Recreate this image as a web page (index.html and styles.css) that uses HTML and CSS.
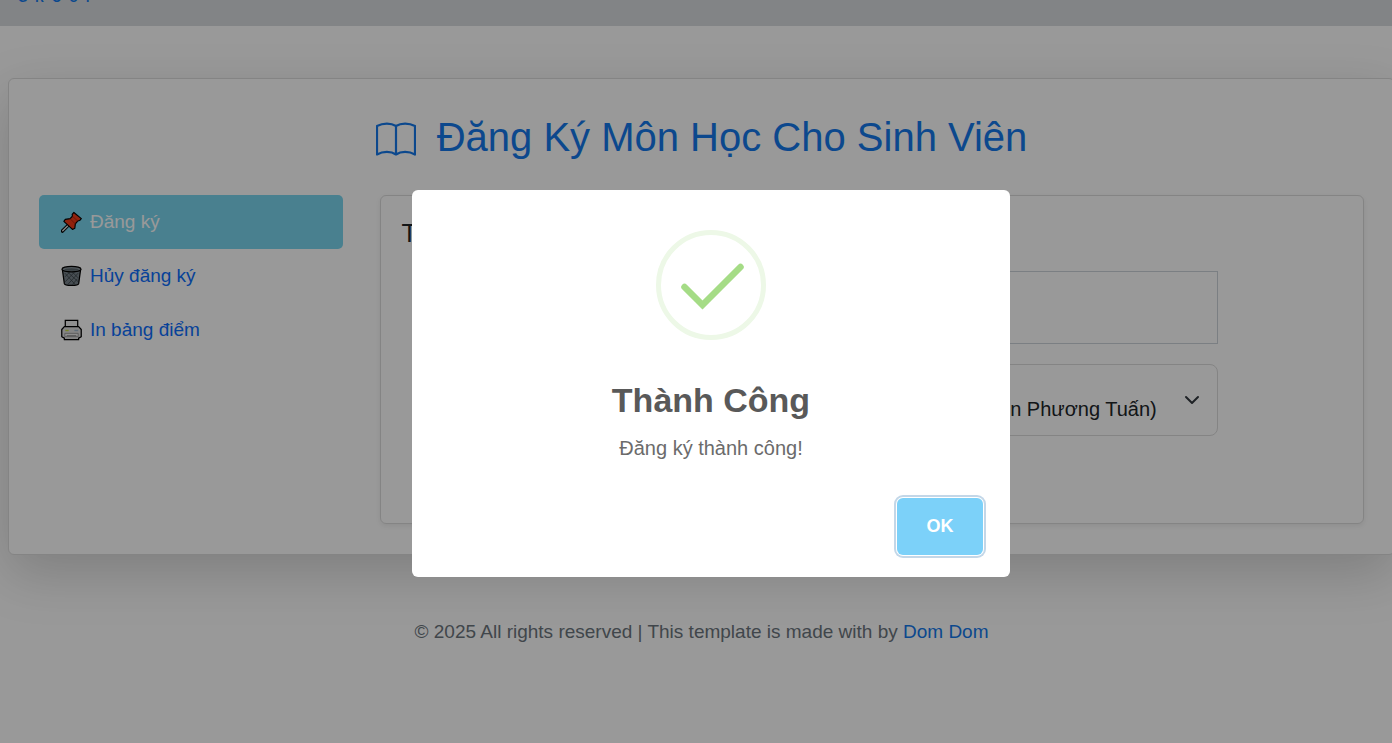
FILE: index.html
```html
<!DOCTYPE html>
<html lang="vi">
<head>
<meta charset="utf-8">
<title>Đăng Ký Môn Học</title>
<link rel="stylesheet" href="styles.css">
</head>
<body>
<header class="topbar"><span class="brand">GROUP</span></header>
<main class="panel">
  <h1 class="title">
    <svg class="title-icon" viewBox="0 0 40 34" fill="none" stroke="currentColor" stroke-width="2.200" stroke-linejoin="round" aria-hidden="true">
      <path d="M20 4C15 .8 7 .8 1 4V32.500C7 29 15 29 20 32.500C25 29 33 29 39 32.500V4C33 .8 25 .8 20 4ZM20 4V32.500"/>
    </svg>
    <span>Đăng Ký Môn Học Cho Sinh Viên</span>
  </h1>
  <div class="columns">
    <nav class="menu">
      <a class="menu-item active" href="#">
        <svg class="menu-icon" viewBox="0 0 22 22" aria-hidden="true">
          <path d="M1.500 20.500L8.500 13.500" stroke="#000" stroke-width="3.600" stroke-linecap="round"/>
          <path d="M1.800 20.200L8.500 13.500" stroke="#ddd" stroke-width="1.500" stroke-linecap="round"/>
          <path d="M13.500 1L21.300 7.500L19.500 9.500L17.500 10L15 13L14.500 17.500L12 18.800L3 10.300L4.500 8.300L9.500 7.500L12 5L11.700 3Z" fill="#f03a17" stroke="#000" stroke-width="1.200" stroke-linejoin="round"/>
          <path d="M12 5L17.500 10M9.500 7.500L15 13" stroke="#b82008" stroke-width="1"/>
        </svg>
        <span>Đăng ký</span>
      </a>
      <a class="menu-item" href="#">
        <svg class="menu-icon" viewBox="0 0 22 22" aria-hidden="true">
          <path d="M1.500 4.500L3.500 19C4 21.500 18 21.500 18.500 19L20.500 4.500Z" fill="#78838a" stroke="#000" stroke-width="1.300"/>
          <path d="M4 8L15 20M7 7L18 17M12 7L18 13M18 8L7 20M14 7L4.500 17M9 7L4 12M17 14L12 20" stroke="#394247" stroke-width=".8"/>
          <ellipse cx="11" cy="3.800" rx="10" ry="2.900" fill="#89949b" stroke="#000" stroke-width="1.200"/>
          <ellipse cx="11" cy="4.200" rx="7.500" ry="1.300" fill="#5d686e"/>
        </svg>
        <span>Hủy đăng ký</span>
      </a>
      <a class="menu-item" href="#">
        <svg class="menu-icon" viewBox="0 0 22 22" aria-hidden="true">
          <path d="M4.500 8V1H17.500V8" fill="#eee" stroke="#000" stroke-width="1.300"/>
          <path d="M3.500 7.500H18.500L21.200 10.500V18L18.500 19.500V21.200H3.500V19.500L.8 18V10.500Z" fill="#dedede" stroke="#000" stroke-width="1.300" stroke-linejoin="round"/>
          <path d="M4 14.500H18V18H4Z" fill="#ededed" stroke="#888" stroke-width=".8"/>
          <path d="M6 17H16" stroke="#777" stroke-width=".9"/>
          <path d="M4.500 11.500H8" stroke="#c6da45" stroke-width="1.500"/>
          <path d="M14 11.500H18" stroke="#a1b8cb" stroke-width="1.500"/>
        </svg>
        <span>In bảng điểm</span>
      </a>
    </nav>
    <section class="card">
      <h2 class="card-title">T</h2>
      <form class="form">
        <input class="field" type="text" aria-label="Sinh viên">
        <div class="select-wrap">
          <select class="select" aria-label="Môn học"><option>(Nguyễn Phương Tuấn)</option></select>
          <svg class="chevron" viewBox="0 0 16 16" fill="none" stroke="#343a40" stroke-width="2" stroke-linecap="round" stroke-linejoin="round" aria-hidden="true"><path d="m2 5 6 6 6-6"/></svg>
        </div>
      </form>
    </section>
  </div>
</main>
<footer class="footer">© 2025 All rights reserved | This template is made with by <a href="#">Dom Dom</a></footer>

<div class="overlay">
  <div class="modal" role="dialog" aria-modal="true" aria-labelledby="modal-title">
    <svg class="success" viewBox="0 0 110 110" fill="none" aria-hidden="true">
      <circle cx="55" cy="55" r="52.500" stroke="#edf8e7" stroke-width="5"/>
      <path d="M28.500 57L46.500 75L84.500 37" stroke="#a5dc86" stroke-width="6.500" stroke-linecap="round" stroke-linejoin="miter"/>
    </svg>
    <h2 class="modal-title" id="modal-title">Thành Công</h2>
    <p class="modal-text">Đăng ký thành công!</p>
    <div class="modal-footer"><button class="ok" type="button">OK</button></div>
  </div>
</div>
</body>
</html>
```
FILE: styles.css
```css
* { box-sizing: border-box; }
body {
  margin: 0;
  min-height: 100vh;
  overflow: hidden;
  background: #fff;
  color: #212529;
  font: 19px/26px "Liberation Sans", Arial, sans-serif;
}
a { color: #1479ec; text-decoration: none; }
.topbar {
  display: flex;
  align-items: flex-start;
  height: 26px;
  padding-left: 18px;
  background: #d9dcdf;
}
.brand {
  margin-top: -10px;
  color: #1479ec;
  font-size: 12px;
  line-height: 16px;
  font-weight: 700;
  letter-spacing: 8px;
}
.panel {
  margin: 52px -3px 0 8px;
  padding: 30px;
  border: 1px solid #dcdcdc;
  border-radius: 6px;
  background: #fff;
  box-shadow: 0 18px 54px rgba(0, 0, 0, .175);
}
.title {
  display: flex;
  justify-content: center;
  align-items: center;
  gap: 21px;
  margin: 0 0 30px;
  color: #1479ec;
  font-size: 40px;
  line-height: 56px;
  font-weight: 400;
}
.title-icon { width: 40px; height: 34px; margin-top: 4px; }
.columns {
  display: grid;
  grid-template-columns: repeat(12, 1fr);
  column-gap: 37px;
}
.menu { grid-column: span 3; }
.menu-item {
  display: flex;
  align-items: center;
  gap: 8px;
  height: 54px;
  padding: 0 22px;
  border-radius: 5px;
  color: #0d6efd;
}
.menu-item.active { background: #7ad6ef; color: #fff; }
.menu-icon { width: 21px; height: 22px; fill: none; }
.card {
  grid-column: span 9;
  padding: 21px;
  height: 329px;
  border: 1px solid #dcdcdc;
  border-radius: 6px;
  box-shadow: 0 2px 5px rgba(0, 0, 0, .075);
}
.card-title { margin: 0 0 22px; font-size: 26px; line-height: 32px; font-weight: 400; }
.form { display: grid; gap: 20px; max-width: 692px; margin: 0 auto; }
.field { width: 100%; height: 73px; border: 1px solid #ced4da; background: #fff; }
.select-wrap { display: grid; align-items: center; }
.select-wrap > * { grid-area: 1 / 1; }
.select {
  appearance: none;
  width: 100%;
  height: 72px;
  padding: 18px 60px 0 16px;
  border: 1px solid #dcdcdc;
  border-radius: 8px;
  background: #fff;
  color: #212529;
  font: 20px "Liberation Sans", Arial, sans-serif;
  text-align-last: right;
}
.chevron { justify-self: end; width: 16px; height: 16px; margin-right: 18px; }
.footer { margin: 64px -3px 0 8px; text-align: center; color: #6c757d; }
.overlay {
  position: fixed;
  inset: 0;
  display: flex;
  align-items: center;
  justify-content: center;
  padding: 24px 0 0 30px;
  background: rgba(0, 0, 0, .4);
}
.modal {
  width: 598px;
  padding: 40px 27px 22px;
  border-radius: 6px;
  background: #fff;
  text-align: center;
}
.success { display: block; width: 110px; height: 110px; margin: 0 auto; }
.modal-title { margin: 40px 0 16px; color: #595959; font-size: 34px; line-height: 40px; }
.modal-text { margin: 0; color: #6b6b6b; font-size: 20px; line-height: 24px; }
.modal-footer { display: flex; justify-content: flex-end; margin-top: 38px; }
.ok {
  width: 86px;
  height: 57px;
  border: 0;
  border-radius: 6px;
  background: #7cd1f9;
  box-shadow: 0 0 0 1px #fff, 0 0 0 3px #c3d7e8;
  color: #fff;
  font: 700 18px "Liberation Sans", Arial, sans-serif;
}
```
